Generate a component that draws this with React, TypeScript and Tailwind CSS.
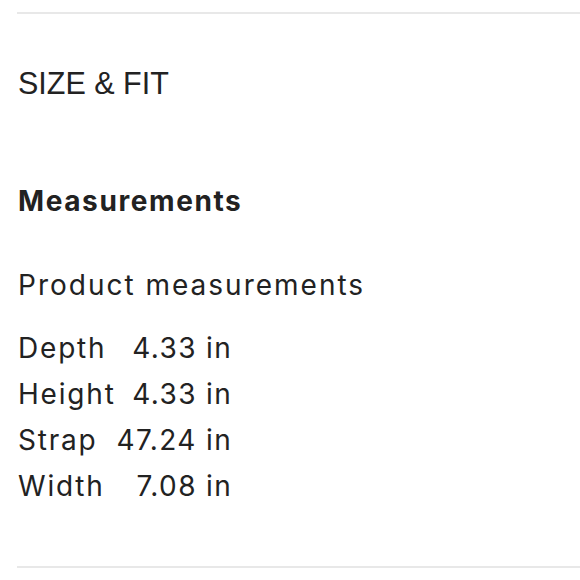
import React from "react";

const rows: [string, string][] = [
  ["Depth", "4.33 in"],
  ["Height", "4.33 in"],
  ["Strap", "47.24 in"],
  ["Width", "7.08 in"],
];

export default function App() {
  return (
    <div className="w-[580px] h-[580px] bg-white overflow-hidden pl-[17px] pt-[12px] text-[#222222]">
      <div className="h-[2px] bg-[#e8e8e8]" />
      <div
        className="mt-[46px] ml-[1px] text-[30.5px] leading-[46px]"
        style={{ fontFamily: '"Liberation Sans", Arial, sans-serif' }}
      >
        SIZE &amp; FIT
      </div>
      <div
        className="ml-[1px]"
        style={{ fontFamily: 'Inter, "Open Sans", sans-serif' }}
      >
        <div className="mt-[72px] text-[28px] leading-[46px] font-bold tracking-[1.6px]">
          Measurements
        </div>
        <div className="mt-[38px] text-[28px] leading-[46px] tracking-[2px]">
          Product measurements
        </div>
        <div className="mt-[17px] grid grid-cols-[auto_auto] w-fit gap-x-[1px] text-[28px] leading-[46px] tracking-[1.8px]">
          {rows.map(([k, v]) => (
            <React.Fragment key={k}>
              <div>{k}</div>
              <div className="text-right tracking-[1.4px]">{v}</div>
            </React.Fragment>
          ))}
        </div>
      </div>
      <div className="mt-[57px] h-[2px] bg-[#e8e8e8]" />
    </div>
  );
}
